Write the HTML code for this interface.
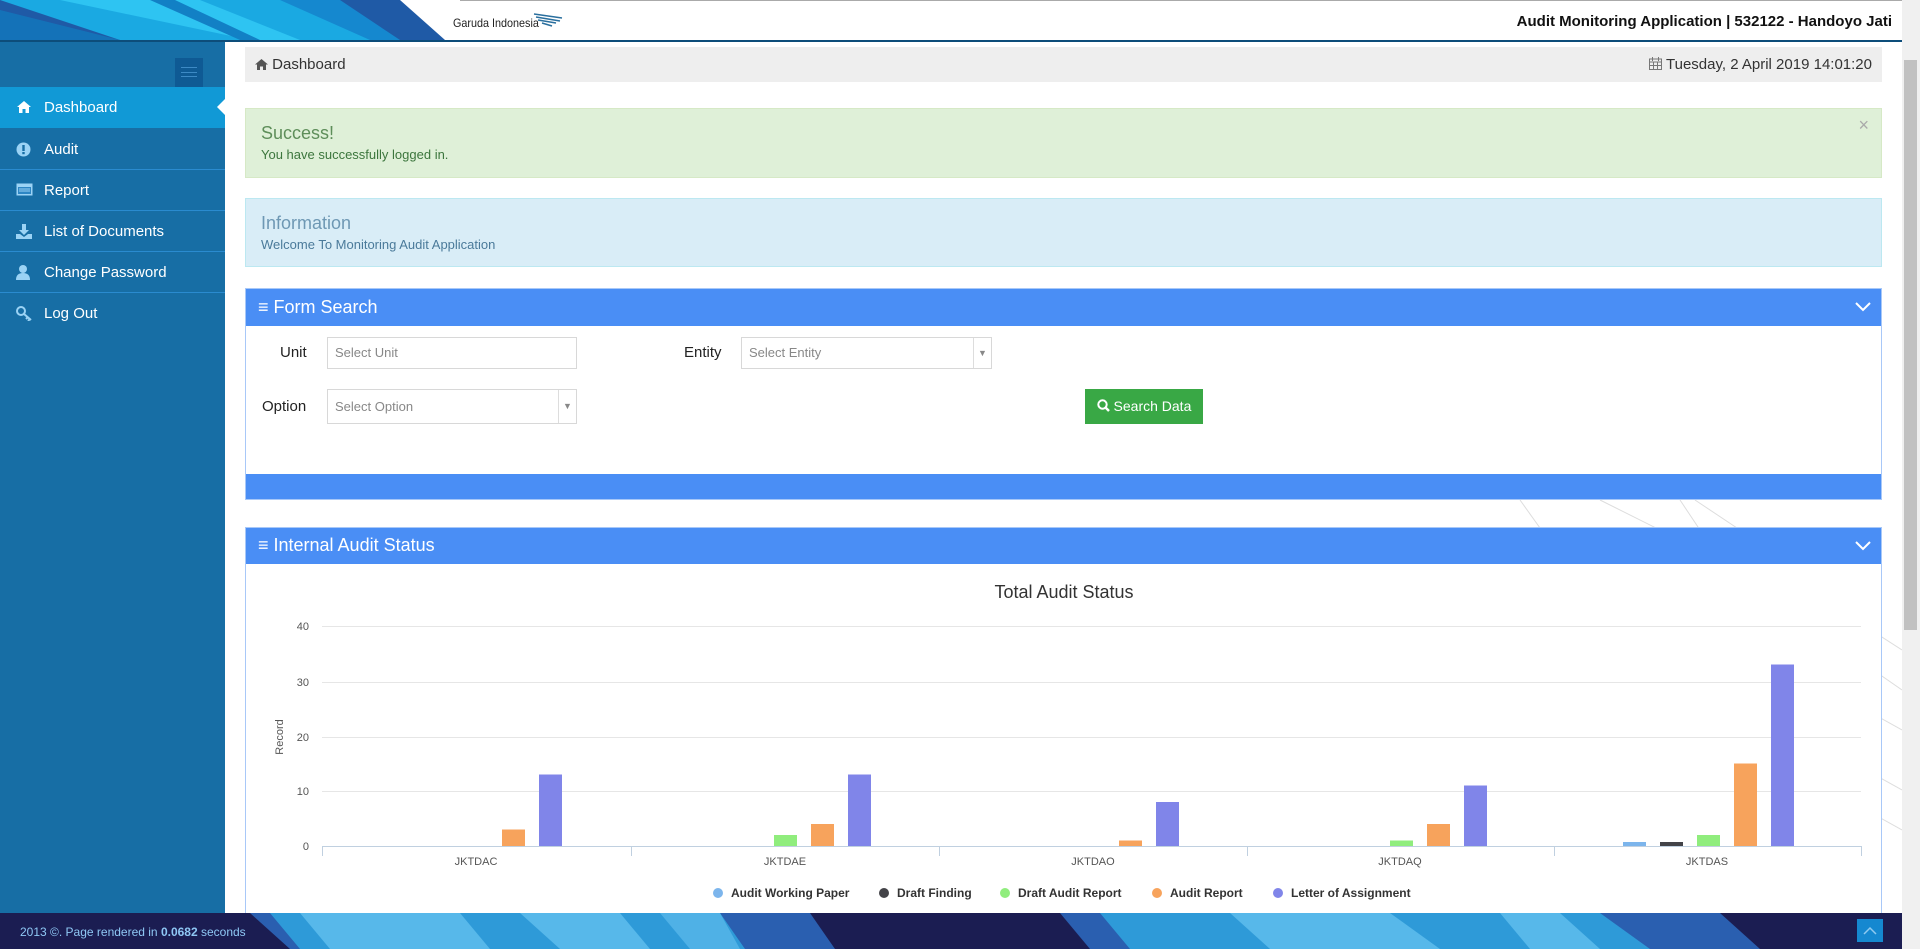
<!DOCTYPE html>
<html><head><meta charset="utf-8"><style>
*{box-sizing:border-box;margin:0;padding:0}
body{width:1920px;height:949px;overflow:hidden;font-family:"Liberation Sans",sans-serif;background:#fff;position:relative;color:#333}
.abs{position:absolute}
#hdr{left:0;top:0;width:1902px;height:42px;background:#fff;border-bottom:2px solid #0d4d7a;border-top:1px solid #aaa}
#side{left:0;top:42px;width:225px;height:871px;background:#176ea5}
.mi{position:absolute;left:0;width:225px;height:41px;color:#fff;font-size:15px;line-height:41px;padding-left:44px;border-bottom:1px solid #2a8bcf}
.mi svg{position:absolute;left:16px;top:13px}
.act{background:#1199d6;border-bottom:none}
.panelh{background:#4a8ef5;color:#fff;font-size:18px;padding-left:12px}
.inp{position:absolute;border:1px solid #d8d8d8;background:#fff;font-size:13px;color:#888;padding-left:7px}
.lbl{position:absolute;font-size:15px;color:#222}
.chev{position:absolute;right:10px;top:13px}
</style></head><body>
<div id="hdr" class="abs">
<svg class="abs" style="left:0;top:-1px" width="460" height="40"><rect width="460" height="40" fill="#fff"/><polygon points="0,0 400,0 445,40 0,40" fill="#1f5aa6"/><polygon points="0,0 330,0 390,40 120,40" fill="#1aa9e2"/><polygon points="0,10 120,40 0,40" fill="#1472b8"/><polygon points="60,0 200,0 300,40 250,40" fill="#2ec4f2"/><polygon points="280,0 340,0 400,40 370,40" fill="#1588cf"/><polygon points="150,0 175,0 260,40 240,40" fill="#1280c5"/></svg>
<div class="abs" style="left:453px;top:15px;font-size:12px;color:#222;transform:scaleX(.9);transform-origin:left">Garuda Indonesia</div>
<svg class="abs" style="left:532px;top:11px" width="32" height="16"><path d="M2 2 L30 6 M4 5 L28 9 M6 8 L24 11 M10 11 L20 14" stroke="#2a6f9e" stroke-width="1.5"/></svg>
<div class="abs" style="right:10px;top:12px;font-size:15px;font-weight:bold;color:#111">Audit Monitoring Application | 532122 - Handoyo Jati</div>
</div>
<div class="abs" style="left:1902px;top:0;width:18px;height:949px;background:#f0f0f0"><div style="position:absolute;left:2px;top:60px;width:13px;height:570px;background:#c1c1c1"></div></div>
<div id="side" class="abs">
<div class="abs" style="left:175px;top:16px;width:28px;height:29px;background:#0f5a94"><div style="margin:9px 6px;height:10px;border-top:1px solid #3d8ac5;border-bottom:1px solid #3d8ac5"><div style="margin-top:4px;border-top:1px solid #3d8ac5"></div></div></div>
<div class="mi act" style="top:45px">Dashboard<svg width="16" height="14"><path d="M8 1 L1 7 L3 7 L3 13 L6.5 13 L6.5 9 L9.5 9 L9.5 13 L13 13 L13 7 L15 7Z" fill="#fff"/></svg><div style="position:absolute;right:0;top:12px;border:8px solid transparent;border-right-color:#fff;border-left:0"></div></div>
<div class="mi" style="top:87px">Audit<svg width="15" height="15"><circle cx="7.5" cy="7.5" r="7" fill="#9bd3f5"/><rect x="6.3" y="3" width="2.4" height="6" fill="#176ea5"/><rect x="6.3" y="10" width="2.4" height="2.2" fill="#176ea5"/></svg></div>
<div class="mi" style="top:128px">Report<svg width="17" height="13"><rect x=".5" y=".5" width="16" height="12" fill="#9bd3f5"/><rect x="2" y="4" width="13" height="7" fill="#2d86c4"/><path d="M3 6h11M3 8h11" stroke="#9bd3f5"/></svg></div>
<div class="mi" style="top:169px">List of Documents<svg width="16" height="15"><path d="M6 0h4v6h3l-5 5-5-5h3z M0 10h4l4 3 4-3h4v5H0z" fill="#9bd3f5"/></svg></div>
<div class="mi" style="top:210px">Change Password<svg width="14" height="15"><circle cx="7" cy="4" r="4" fill="#9bd3f5"/><path d="M0 15 Q0 8 7 8 Q14 8 14 15Z" fill="#9bd3f5"/></svg></div>
<div class="mi" style="top:251px;border:none">Log Out<svg width="16" height="15"><circle cx="5" cy="5" r="4" fill="none" stroke="#9bd3f5" stroke-width="2"/><path d="M8 8 L15 14 M12 11 L10 13 M14 13 L12 15" stroke="#9bd3f5" stroke-width="2"/></svg></div>
</div>
<svg class="abs" style="left:1500px;top:490px" width="402" height="423"><g stroke="#ddd" fill="none"><path d="M20 10 L45 45 M100 10 L160 40 M180 10 L200 40 M195 10 L240 40 M340 120 L402 160 M330 150 L402 200 M330 200 L402 240 M330 260 L402 300 M330 300 L402 340"/></g></svg>
<div class="abs" style="left:245px;top:47px;width:1637px;height:35px;background:#eee;font-size:15px;color:#333;line-height:35px;padding-left:10px">
<svg width="13" height="12" style="vertical-align:-1px"><path d="M6.5 1 L0 6.5 L2 6.5 L2 12 L5 12 L5 8.5 L8 8.5 L8 12 L11 12 L11 6.5 L13 6.5Z" fill="#555"/></svg> Dashboard
<span style="position:absolute;right:10px;top:0"><svg width="13" height="13" style="vertical-align:-1px"><rect x=".5" y="2" width="12" height="10.5" fill="none" stroke="#777"/><path d="M.5 5h12M3.5 0v4M9.5 0v4M4.5 5v7M8.5 5v7M.5 8.5h12" stroke="#777"/></svg> Tuesday, 2 April 2019 14:01:20</span></div>
<div class="abs" style="left:245px;top:108px;width:1637px;height:70px;background:#dff0d8;border:1px solid #d6e9c6;color:#3c763d;padding:14px 15px"><div style="font-size:18px;color:#5e8e5a">Success!</div><div style="font-size:13px;margin-top:3px">You have successfully logged in.</div><div style="position:absolute;right:12px;top:6px;font-size:18px;color:#aaa">×</div></div>
<div class="abs" style="left:245px;top:198px;width:1637px;height:69px;background:#d9edf7;border:1px solid #bce8f1;color:#31708f;padding:14px 15px"><div style="font-size:18px;color:#6e98b4">Information</div><div style="font-size:13px;margin-top:3px;color:#4a7a9a">Welcome To Monitoring Audit Application</div></div>
<div class="abs" style="left:245px;top:288px;width:1637px;height:212px;border:1px solid #a8c8f8;background:#fff">
<div class="panelh" style="height:37px;line-height:36px">≡ Form Search<svg class="chev" width="16" height="10"><path d="M1 1 L8 8 L15 1" stroke="#fff" stroke-width="2" fill="none"/></svg></div>
<div class="abs" style="left:0;bottom:0;width:100%;height:25px;background:#4a8ef5"></div>
</div>
<div class="lbl" style="left:280px;top:344px">Unit</div>
<div class="inp" style="left:327px;top:337px;width:250px;height:32px;line-height:30px">Select Unit</div>
<div class="lbl" style="left:684px;top:344px">Entity</div>
<div class="inp" style="left:741px;top:337px;width:251px;height:32px;line-height:30px">Select Entity<span style="position:absolute;right:0;top:0;width:18px;height:30px;border-left:1px solid #ddd;font-size:9px;text-align:center">▼</span></div>
<div class="lbl" style="left:262px;top:398px">Option</div>
<div class="inp" style="left:327px;top:389px;width:250px;height:35px;line-height:33px">Select Option<span style="position:absolute;right:0;top:0;width:18px;height:33px;border-left:1px solid #ddd;font-size:9px;text-align:center">▼</span></div>
<div class="abs" style="left:1085px;top:389px;width:118px;height:35px;background:#39a845;color:#fff;font-size:14px;line-height:35px;text-align:center"><svg width="13" height="13" style="vertical-align:-1px"><circle cx="5.5" cy="5.5" r="4.2" fill="none" stroke="#fff" stroke-width="2"/><path d="M8.5 8.5 L12 12" stroke="#fff" stroke-width="2.5"/></svg> Search Data</div>
<div class="abs" style="left:245px;top:527px;width:1637px;height:400px;border:1px solid #a8c8f8;background:#fff">
<div class="panelh" style="height:36px;line-height:35px">≡ Internal Audit Status<svg class="chev" width="16" height="10"><path d="M1 1 L8 8 L15 1" stroke="#fff" stroke-width="2" fill="none"/></svg></div>
</div>
<svg class="abs" style="left:0;top:0" width="1920" height="949" font-family="Liberation Sans, sans-serif">
<text x="1064" y="598" text-anchor="middle" font-size="18" fill="#333">Total Audit Status</text>
<g stroke="#e6e6e6"><path d="M322 626.5H1861M322 682.5H1861M322 737.5H1861M322 791.5H1861"/></g>
<path d="M322 846.5H1861" stroke="#c0d0e0"/>
<g stroke="#c0d0e0"><path d="M322.5 846v10M631.5 846v10M939.5 846v10M1247.5 846v10M1554.5 846v10M1861.5 846v10"/></g>
<g font-size="11" fill="#555" text-anchor="end"><text x="309" y="630">40</text><text x="309" y="686">30</text><text x="309" y="741">20</text><text x="309" y="795">10</text><text x="309" y="850">0</text></g>
<text transform="translate(283,737) rotate(-90)" text-anchor="middle" font-size="11" fill="#555">Record</text>
<g font-size="11" fill="#555" text-anchor="middle"><text x="476" y="865">JKTDAC</text><text x="785" y="865">JKTDAE</text><text x="1093" y="865">JKTDAO</text><text x="1400" y="865">JKTDAQ</text><text x="1707" y="865">JKTDAS</text></g>
<g fill="#f7a35c"><rect x="502" y="829.5" width="23" height="16.5"/><rect x="811" y="824" width="23" height="22"/><rect x="1119" y="840.5" width="23" height="5.5"/><rect x="1427" y="824" width="23" height="22"/><rect x="1734" y="763.5" width="23" height="82.5"/></g>
<g fill="#8085e9"><rect x="539" y="774.5" width="23" height="71.5"/><rect x="848" y="774.5" width="23" height="71.5"/><rect x="1156" y="802" width="23" height="44"/><rect x="1464" y="785.5" width="23" height="60.5"/><rect x="1771" y="664.5" width="23" height="181.5"/></g>
<g fill="#90ed7d"><rect x="774" y="835" width="23" height="11"/><rect x="1390" y="840.5" width="23" height="5.5"/><rect x="1697" y="835" width="23" height="11"/></g>
<rect x="1623" y="842" width="23" height="4" fill="#7cb5ec"/><rect x="1660" y="842" width="23" height="4" fill="#434348"/>
<g font-size="12" font-weight="bold" fill="#333"><circle cx="718" cy="893" r="5" fill="#7cb5ec"/><text x="731" y="897">Audit Working Paper</text><circle cx="884" cy="893" r="5" fill="#434348"/><text x="897" y="897">Draft Finding</text><circle cx="1005" cy="893" r="5" fill="#90ed7d"/><text x="1018" y="897">Draft Audit Report</text><circle cx="1157" cy="893" r="5" fill="#f7a35c"/><text x="1170" y="897">Audit Report</text><circle cx="1278" cy="893" r="5" fill="#8085e9"/><text x="1291" y="897">Letter of Assignment</text></g>
</svg>
<svg class="abs" style="left:0;top:913px" width="1902" height="36">
<rect width="1902" height="36" fill="#1b1d52"/>
<polygon points="250,0 810,0 835,36 290,36" fill="#2a5fb0"/>
<polygon points="270,0 720,0 745,36 300,36" fill="#2e9ad8"/>
<polygon points="300,0 460,0 490,36 330,36" fill="#57b8ea"/>
<polygon points="520,0 620,0 650,36 560,36" fill="#57b8ea"/>
<polygon points="660,0 720,0 740,36 690,36" fill="#4fb1e6"/>
<polygon points="1060,0 1720,0 1760,36 1090,36" fill="#2a5fb0"/>
<polygon points="1100,0 1600,0 1650,36 1130,36" fill="#2e9ad8"/>
<polygon points="1230,0 1390,0 1440,36 1270,36" fill="#57b8ea"/>
<polygon points="1500,0 1560,0 1600,36 1530,36" fill="#57b8ea"/>
<rect x="1857" y="6" width="26" height="23" fill="#1588d0"/>
<path d="M1864 21 L1870 15 L1876 21" stroke="#8fcaf0" stroke-width="1.5" fill="none"/>
<text x="20" y="23" font-family="Liberation Sans, sans-serif" font-size="12" fill="#8fc8f5">2013 ©. Page rendered in <tspan font-weight="bold">0.0682</tspan> seconds</text>
</svg>
</body></html>
